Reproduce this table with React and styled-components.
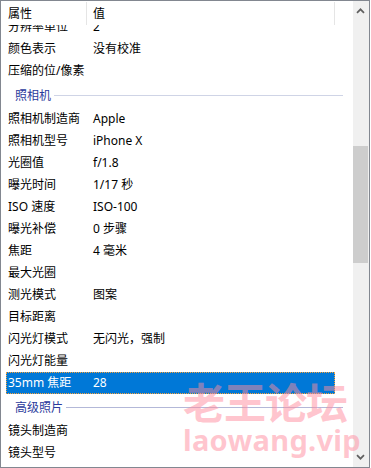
import React from 'react';
import styled, { createGlobalStyle } from 'styled-components';

const Global = createGlobalStyle`
  html, body { margin: 0; padding: 0; background: #fff; }
  body {
    font-family: "Noto Sans", "Noto Sans CJK SC", sans-serif;
    font-size: 12px;
    color: #000;
  }
`;

const Frame = styled.div`
  position: relative;
  width: 370px;
  height: 468px;
  box-sizing: border-box;
  border: 1px solid #828790;
  display: flex;
  overflow: hidden;
  background: #fff;
`;

const Main = styled.div`
  flex: 1;
  min-width: 0;
  display: flex;
  flex-direction: column;
`;

const Header = styled.div`
  flex-shrink: 0;
  height: 24px;
  box-sizing: border-box;
  padding-top: 1px;
  display: grid;
  grid-template-columns: 86px 248px 1fr;
  background: #fff;
`;

const HeaderCell = styled.div`
  height: 23px;
  box-sizing: border-box;
  padding-left: ${(p) => p.$pad}px;
  border-right: ${(p) => (p.$divider ? '1px solid #e5e5e5' : 'none')};
  display: flex;
  align-items: center;
  padding-bottom: 1px;
  white-space: nowrap;
`;

const Viewport = styled.div`
  flex: 1;
  overflow: hidden;
`;

const List = styled.div`
  margin-top: -9px;
  display: flex;
  flex-direction: column;
`;

const Row = styled.div`
  margin-left: 5px;
  width: 329px;
  height: 22px;
  box-sizing: border-box;
  display: grid;
  grid-template-columns: 80px 1fr;
  line-height: 21px;
  white-space: nowrap;
  background: ${(p) => (p.$selected ? '#0078d7' : 'transparent')};
  color: ${(p) => (p.$selected ? '#fff' : '#000')};
  outline: ${(p) => (p.$selected ? '1px dotted #f7a23a' : 'none')};
  outline-offset: -1px;
`;

const Label = styled.span`
  padding-left: 2px;
  overflow: hidden;
`;

const Value = styled.span`
  padding-left: 7px;
  overflow: hidden;
`;

const Group = styled.div`
  height: 26px;
  display: flex;
  align-items: center;
  gap: 3px;
  padding-left: 14px;
  margin-right: 10px;
  color: #2b3a9c;
  white-space: nowrap;
`;

const GroupLine = styled.div`
  flex: 1;
  height: 1px;
  margin-top: 1px;
  background: ${(p) => p.$color};
`;

const ScrollBar = styled.div`
  width: 16px;
  flex-shrink: 0;
  background: #f0f0f0;
  display: flex;
  flex-direction: column;
`;

const ArrowButton = styled.div`
  height: 20px;
  flex-shrink: 0;
  display: flex;
  align-items: center;
  justify-content: center;
  padding-right: 1px;
`;

const Track = styled.div`
  flex: 1;
`;

const Thumb = styled.div`
  margin-top: ${(p) => p.$offset}px;
  height: ${(p) => p.$size}px;
  width: 15px;
  background: #cdcdcd;
`;

const Watermark = styled.div`
  position: absolute;
  left: 182px;
  top: 375px;
  display: flex;
  flex-direction: column;
  pointer-events: none;
  color: rgba(255, 140, 158, 0.5);
  font-weight: 700;
  white-space: nowrap;
`;

const WatermarkTitle = styled.span`
  font-family: "Noto Sans CJK SC", sans-serif;
  font-size: 42px;
  line-height: 50px;
  letter-spacing: -1px;
`;

const WatermarkUrl = styled.span`
  font-family: "Noto Sans", sans-serif;
  font-size: 29px;
  line-height: 36px;
  margin-top: -4px;
  letter-spacing: 0.3px;
`;

const Chevron = ({ down }) => (
  <svg width="9" height="6" viewBox="0 0 9 6">
    <path
      d={down ? 'M1 1.2 L4.5 4.7 L8 1.2' : 'M1 4.8 L4.5 1.3 L8 4.8'}
      fill="none"
      stroke="#606060"
      strokeWidth="1.7"
    />
  </svg>
);

const items = [
  { k: '分辨率单位', v: '2' },
  { k: '颜色表示', v: '没有校准' },
  { k: '压缩的位/像素', v: '' },
  { group: '照相机', line: '#cfd4e6' },
  { k: '照相机制造商', v: 'Apple' },
  { k: '照相机型号', v: 'iPhone X' },
  { k: '光圈值', v: 'f/1.8' },
  { k: '曝光时间', v: '1/17 秒' },
  { k: 'ISO 速度', v: 'ISO-100' },
  { k: '曝光补偿', v: '0 步骤' },
  { k: '焦距', v: '4 毫米' },
  { k: '最大光圈', v: '' },
  { k: '测光模式', v: '图案' },
  { k: '目标距离', v: '' },
  { k: '闪光灯模式', v: '无闪光，强制' },
  { k: '闪光灯能量', v: '' },
  { k: '35mm 焦距', v: '28', selected: true },
  { group: '高级照片', line: '#b3b8d8' },
  { k: '镜头制造商', v: '' },
  { k: '镜头型号', v: '' },
];

export default function App() {
  return (
    <>
      <Global />
      <Frame>
        <Main>
          <Header>
            <HeaderCell $pad={7} $divider>属性</HeaderCell>
            <HeaderCell $pad={6} $divider>值</HeaderCell>
            <HeaderCell $pad={0} />
          </Header>
          <Viewport>
            <List>
              {items.map((it, i) =>
                it.group ? (
                  <Group key={i}>
                    <span>{it.group}</span>
                    <GroupLine $color={it.line} />
                  </Group>
                ) : (
                  <Row key={i} $selected={it.selected}>
                    <Label>{it.k}</Label>
                    <Value>{it.v}</Value>
                  </Row>
                )
              )}
            </List>
          </Viewport>
        </Main>
        <ScrollBar>
          <ArrowButton>
            <Chevron />
          </ArrowButton>
          <Track>
            <Thumb $offset={125} $size={117} />
          </Track>
          <ArrowButton>
            <Chevron down />
          </ArrowButton>
        </ScrollBar>
        <Watermark>
          <WatermarkTitle>老王论坛</WatermarkTitle>
          <WatermarkUrl>laowang.vip</WatermarkUrl>
        </Watermark>
      </Frame>
    </>
  );
}
